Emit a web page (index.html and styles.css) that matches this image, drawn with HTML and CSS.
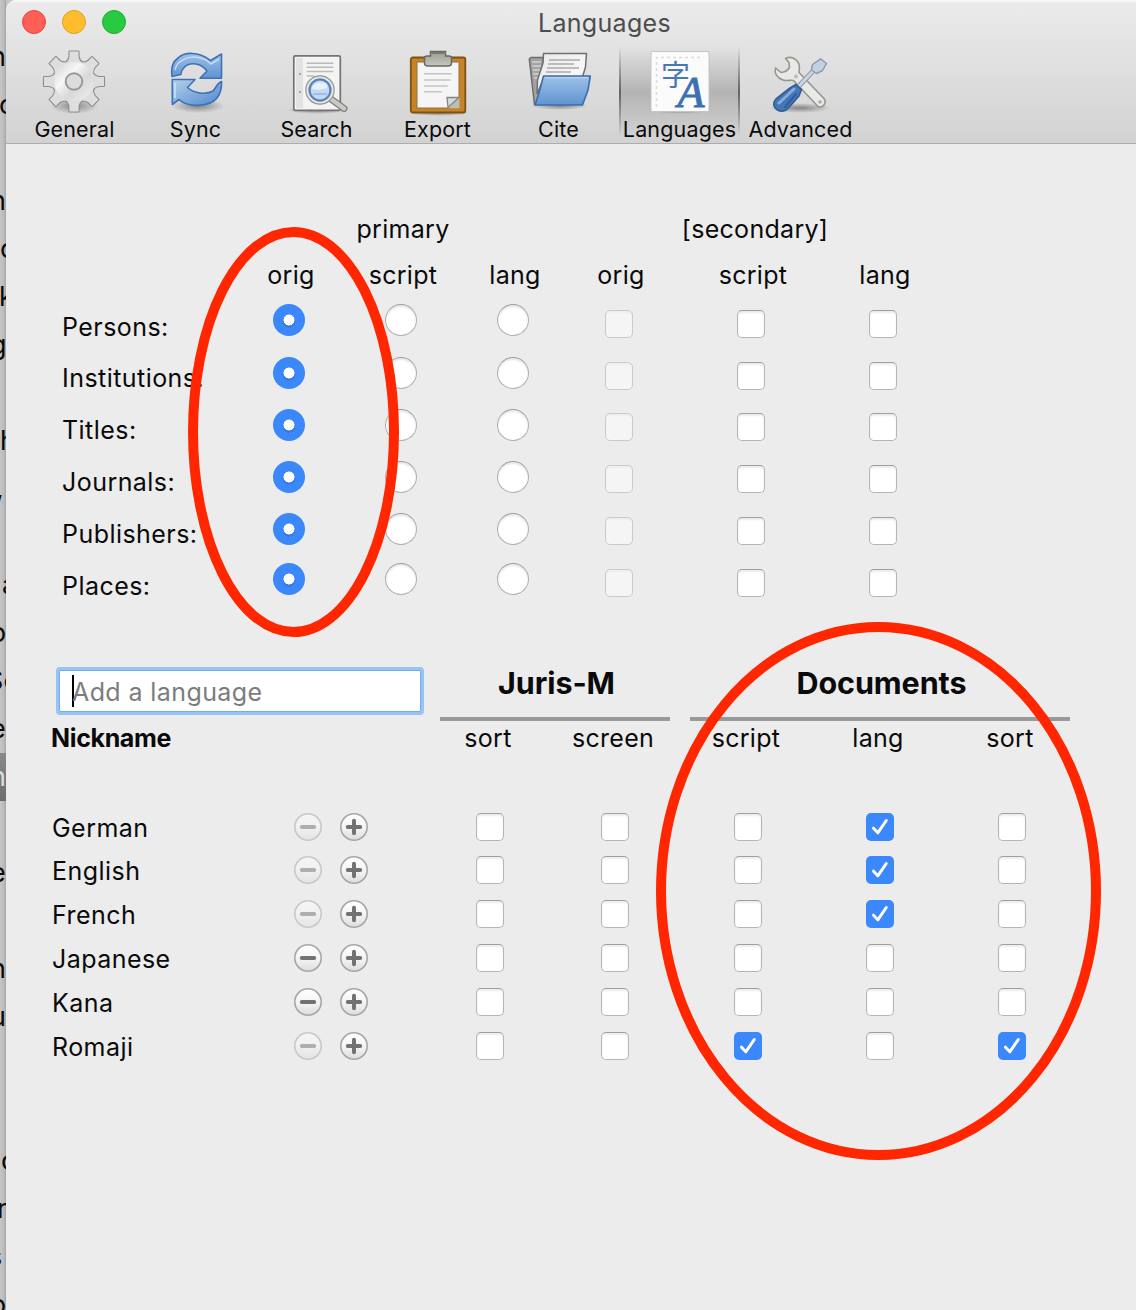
FILE: index.html
```html
<!DOCTYPE html>
<html lang="en">
<head>
<meta charset="utf-8">
<title>Languages</title>
<link rel="stylesheet" href="styles.css">
</head>
<body>
<svg class="defs" width="0" height="0">
  <defs>
    <linearGradient id="steel" x1="0" y1="0" x2="1" y2="1"><stop offset="0" stop-color="#d2d2d2"/><stop offset=".35" stop-color="#f6f6f6"/><stop offset=".6" stop-color="#d8d8d8"/><stop offset="1" stop-color="#f2f2f2"/></linearGradient>
    <linearGradient id="blue" x1="0" y1="0" x2="0" y2="1"><stop offset="0" stop-color="#9fc1e8"/><stop offset="1" stop-color="#5f93d0"/></linearGradient>
    <linearGradient id="blueUp" x1="0" y1="0" x2="1" y2="1"><stop offset="0" stop-color="#b4d0ef"/><stop offset="1" stop-color="#5288cb"/></linearGradient>
    <linearGradient id="paper" x1="0" y1="0" x2="1" y2="1"><stop offset="0" stop-color="#e9e9e9"/><stop offset="1" stop-color="#fefefe"/></linearGradient>
    <linearGradient id="clip" x1="0" y1="0" x2="0" y2="1"><stop offset="0" stop-color="#9b9c90"/><stop offset="1" stop-color="#c6c7bd"/></linearGradient>
    <radialGradient id="shade"><stop offset="0" stop-color="#000" stop-opacity=".38"/><stop offset="1" stop-color="#000" stop-opacity="0"/></radialGradient>
    <linearGradient id="knob" x1="0" y1="0" x2="0" y2="1"><stop offset="0" stop-color="#fff"/><stop offset=".55" stop-color="#f3f3f3"/><stop offset="1" stop-color="#dcdcdc"/></linearGradient>
    <path id="tooth" d="M23.500 13Q27 10.500 27.500 6.500V1.500H36.500V6.500Q37 10.500 40.500 13Z"/>
    <g id="gear"><circle cx="32" cy="31.500" r="20.500"/><use href="#tooth"/><use href="#tooth" transform="rotate(45 32 31.500)"/><use href="#tooth" transform="rotate(90 32 31.500)"/><use href="#tooth" transform="rotate(135 32 31.500)"/><use href="#tooth" transform="rotate(180 32 31.500)"/><use href="#tooth" transform="rotate(225 32 31.500)"/><use href="#tooth" transform="rotate(270 32 31.500)"/><use href="#tooth" transform="rotate(315 32 31.500)"/></g>
    <symbol id="tick" viewBox="0 0 28 28"><path d="M7.600 15.500L11.800 20L20.300 7.700" fill="none" stroke="#1f5fc4" stroke-opacity=".45" stroke-width="2.800" stroke-linecap="round" stroke-linejoin="round"/><path d="M7.500 15.200L11.800 19.800L20.300 7.500" fill="none" stroke="#fff" stroke-width="3" stroke-linecap="round" stroke-linejoin="round"/></symbol>
    <symbol id="minus" viewBox="0 0 28 28"><circle cx="14" cy="14" r="13.200" fill="url(#knob)" stroke="#a6a6a6" stroke-width="1.600"/><path d="M7.800 14H20.200" stroke="#727272" stroke-width="4" stroke-linecap="round"/></symbol>
    <symbol id="plus" viewBox="0 0 28 28"><circle cx="14" cy="14" r="13.200" fill="url(#knob)" stroke="#a6a6a6" stroke-width="1.600"/><path d="M7.800 14H20.200M14 7.800V20.200" stroke="#727272" stroke-width="4" stroke-linecap="round"/></symbol>
  </defs>
</svg>

<div class="desktop">
  <aside class="behind">
    <p></p><p class="l9">n</p><p class="l1">c</p><p></p><p class="l9">h</p><p>c</p><p class="l1">k</p><p class="l9">g</p><p></p><p>h</p><p class="l4">,</p><p></p><p class="r2">a</p><p class="l9">o</p><p class="l13">Se</p><p class="l9">er</p><p class="selected l9">n</p><p></p><p class="l9">e</p><p></p><p class="l9">n</p><p class="l9">u</p><p></p><p></p><p class="r1">c</p><p class="l3">r</p><p class="l12">s</p><p class="l9">o</p>
  </aside>

  <main class="window">
    <header class="chrome">
      <div class="titlebar">
        <div class="lights"><i class="light close"></i><i class="light min"></i><i class="light zoom"></i></div>
        <h1 class="title">Languages</h1>
      </div>
      <nav class="tools">
        <div class="tool">
          <svg class="icon" viewBox="0 0 64 64"><ellipse cx="32" cy="56" rx="24" ry="8" fill="url(#shade)"/><use href="#gear" fill="#8f8f8f" stroke="#8f8f8f" stroke-width="2.200" stroke-linejoin="round"/><use href="#gear" fill="#dedede"/><circle cx="32" cy="31.500" r="19.500" fill="url(#steel)"/><circle cx="32" cy="31.500" r="8.300" fill="#dcdcdc" stroke="#999" stroke-width="2"/></svg>
          <span>General</span>
        </div>
        <div class="tool">
          <svg class="icon" viewBox="0 0 64 64"><ellipse cx="35" cy="56" rx="27" ry="7" fill="url(#shade)"/><g stroke="#3e72b6" stroke-width="1.600" stroke-linejoin="round"><path fill="url(#blue)" d="M9 26.500C8 17 9.500 12 15 8C21 2 36 1 47.500 10.500L58.500 4V28.300H37L44 21C38 12.500 27 12 21.500 17C18.500 20 18 22 17.800 24.500Z"/><path fill="url(#blueUp)" d="M9.300 29.500V54.500L16 49.500C25 58 47 57 54 48C58 43 58.800 39 58.600 31.500C54 33 53 38 50 41C43 45 31 43.500 24.500 37.500L32 29.500Z"/></g><path d="M12 20C14 10 28 3 43 10L48 14L56 9" fill="none" stroke="#c7dcf4" stroke-width="1.500"/><path d="M12 33V48" stroke="#d5e5f7" stroke-width="1.400"/></svg>
          <span>Sync</span>
        </div>
        <div class="tool">
          <svg class="icon" viewBox="0 0 64 64"><ellipse cx="33" cy="60" rx="30" ry="4" fill="url(#shade)"/><rect x="9.800" y="5.800" width="46.500" height="54.500" rx="1.500" fill="#f3f3f3" stroke="#737373" stroke-width="1.700"/><path d="M12 8H19V58H12Z" fill="#e2e2e2"/><path d="M22.700 13.300H49.300M22.700 17.300H49.300M22.700 21.500H49.300M22.700 26H30" stroke="#bababa" stroke-width="1.500"/><circle cx="16" cy="24" r="1.200" fill="#aaa"/><circle cx="16" cy="42" r="1.200" fill="#aaa"/><path d="M47 49L60 58.500" stroke="#7f807b" stroke-width="7" stroke-linecap="round"/><path d="M47 49L60 58.500" stroke="#c9cac6" stroke-width="4.500" stroke-linecap="round"/><circle cx="36" cy="40" r="13" fill="#c4daf2" stroke="#92948e" stroke-width="3.500"/><circle cx="36" cy="40" r="12.600" fill="none" stroke="#e7e7e3" stroke-width="2"/><circle cx="36" cy="40" r="10.400" fill="none" stroke="#5381bd" stroke-width="2"/><path d="M28 37Q33 30 43 34V38Q35 41 28 39Z" fill="#e7f1fb"/><path d="M29 44H43" stroke="#9dbfe5" stroke-width="2"/></svg>
          <span>Search</span>
        </div>
        <div class="tool">
          <svg class="icon" viewBox="0 0 64 64"><ellipse cx="34" cy="63" rx="31" ry="3" fill="url(#shade)"/><rect x="5.800" y="7.500" width="54.500" height="55" rx="2" fill="#c48427" stroke="#805114" stroke-width="1.800"/><path d="M12 12H54V48L46 58H12Z" fill="#f5f5f5" stroke="#8e7040" stroke-width="1"/><path d="M12 58.300H42L54.500 47V58.300Z" fill="#bcbcb8"/><path d="M42 47.500H54L43 57.500Z" fill="#d9d9d5" stroke="#85867f" stroke-width="1.300"/><path d="M19 23.700H46.700M19 30H45.300M19 36H42.700M19 41.700H36.700" stroke="#c4c4c4" stroke-width="1.600"/><path d="M25.500 1.500H40.500V6H44Q46.500 6 46.500 8V13Q46.500 16 43 16H23Q19.500 16 19.500 13V8Q19.500 6 22 6H25.500Z" fill="url(#clip)" stroke="#666860" stroke-width="1.500"/><path d="M27 3H39" stroke="#77796e" stroke-width="2"/></svg>
          <span>Export</span>
        </div>
        <div class="tool">
          <svg class="icon" viewBox="0 0 64 64"><ellipse cx="34" cy="56" rx="28" ry="4" fill="url(#shade)"/><path d="M3.300 9L5 7.500H17V30L11 54.500H8.500Z" fill="#a3a3a3" stroke="#6c6c6c" stroke-width="1.500"/><path d="M6 12H15M6.500 16H15M7 20H15M7 24H14M8 28H13" stroke="#d2d2d2" stroke-width="1.300"/><path d="M17.500 3.600H60.500L59.500 17L55.500 30H17L11 44L11.500 30L17 13Z" fill="url(#paper)" stroke="#707070" stroke-width="1.500"/><path d="M23 10H54M22 14H48M21 18H53M20 22H45" stroke="#aaa" stroke-width="1.400"/><path d="M17.500 26H64.300L62 40L56.500 55H9L13 43Z" fill="url(#blue)" stroke="#3b6daf" stroke-width="1.600" stroke-linejoin="round"/><path d="M18.800 27.700H62" stroke="#b9d3ef" stroke-width="1.300"/></svg>
          <span>Cite</span>
        </div>
        <div class="tool active">
          <svg class="icon" viewBox="0 0 64 64"><ellipse cx="33" cy="59" rx="33" ry="5" fill="url(#shade)"/><rect x="4" y="1.500" width="58" height="60" rx="1.500" fill="#fbfbfb" stroke="#c4c4c4"/><path d="M9.500 57V7.500H56" fill="none" stroke="#dcdcdc" stroke-width="1.600" stroke-dasharray="3 3"/><text class="kanji" x="14" y="36">字</text><text class="capital" x="30.500" y="56.500">A</text></svg>
          <span>Languages</span>
        </div>
        <div class="tool">
          <svg class="icon" viewBox="0 0 64 64"><ellipse cx="32" cy="58" rx="31" ry="5" fill="url(#shade)"/><path d="M17.500 8.500C23 5.500 29 9 31 14C32 18 31 20 31 22.500L56 48.500C59 53 55 58.500 50 56.500L25.500 30.500C22 29.500 19 31.500 15 30C9 28 6 23 7.500 18L13 22.500Q19 22 21.500 17.500L21 12.500Z" fill="#e9e9e6" stroke="#969691" stroke-width="1.600" stroke-linejoin="round"/><circle cx="52" cy="52" r="1.800" fill="#aaa"/><circle cx="28" cy="26.500" r="2" fill="#bbb"/><path d="M31 36L47 19" stroke="#8f9cb0" stroke-width="5"/><path d="M31 36L47 19" stroke="#ccd5e4" stroke-width="2.800"/><path d="M43.500 20L44.500 14.500L52.500 8.800L58.500 13.500L54.500 20.500L48.500 23.500Z" fill="#c4d0e2" stroke="#8b9bb3" stroke-width="1.500" stroke-linejoin="round"/><path d="M28 34.500L33.500 39.500L31 46L20 58.500C17 62 12 61.500 9.500 60C5 57 4.500 53 8 49L22 38Z" fill="#4676b5" stroke="#2f5d9c" stroke-width="1.600" stroke-linejoin="round"/><path d="M11 53L26 39" stroke="#86abd9" stroke-width="3" stroke-linecap="round"/><path d="M17 57L28 44" stroke="#345e99" stroke-width="2" stroke-linecap="round"/></svg>
          <span>Advanced</span>
        </div>
      </nav>
    </header>

    <section class="roles">
      <div class="groups"><span class="primary">primary</span><span class="secondary">[secondary]</span></div>
      <div class="row head"><span></span><span>orig</span><span>script</span><span>lang</span><span>orig</span><span>script</span><span>lang</span></div>
      <div class="row high"><span class="name">Persons:</span><i class="radio on"></i><i class="radio"></i><i class="radio"></i><i class="box off"></i><i class="box"></i><i class="box"></i></div>
      <div class="row short"><span class="name">Institutions:</span><i class="radio on"></i><i class="radio"></i><i class="radio"></i><i class="box off"></i><i class="box"></i><i class="box"></i></div>
      <div class="row"><span class="name">Titles:</span><i class="radio on"></i><i class="radio"></i><i class="radio"></i><i class="box off"></i><i class="box"></i><i class="box"></i></div>
      <div class="row"><span class="name">Journals:</span><i class="radio on"></i><i class="radio"></i><i class="radio"></i><i class="box off"></i><i class="box"></i><i class="box"></i></div>
      <div class="row"><span class="name">Publishers:</span><i class="radio on"></i><i class="radio"></i><i class="radio"></i><i class="box off"></i><i class="box"></i><i class="box"></i></div>
      <div class="row high"><span class="name">Places:</span><i class="radio on"></i><i class="radio"></i><i class="radio"></i><i class="box off"></i><i class="box"></i><i class="box"></i></div>
    </section>

    <section class="langs">
      <div class="top">
        <div class="field"><span class="caret"></span><span class="hint">Add a language</span></div>
        <h2 class="group">Juris-M</h2>
        <h2 class="group">Documents</h2>
      </div>
      <div class="entry labels"><b class="nick">Nickname</b><span></span><span></span><span>sort</span><span>screen</span><span>script</span><span>lang</span><span>sort</span></div>
      <div class="entry first"><span class="name">German</span><svg class="btn dim"><use href="#minus"/></svg><svg class="btn"><use href="#plus"/></svg><i class="box"></i><i class="box"></i><i class="box"></i><i class="box on"><svg><use href="#tick"/></svg></i><i class="box"></i></div>
      <div class="entry"><span class="name">English</span><svg class="btn dim"><use href="#minus"/></svg><svg class="btn"><use href="#plus"/></svg><i class="box"></i><i class="box"></i><i class="box"></i><i class="box on"><svg><use href="#tick"/></svg></i><i class="box"></i></div>
      <div class="entry"><span class="name">French</span><svg class="btn dim"><use href="#minus"/></svg><svg class="btn"><use href="#plus"/></svg><i class="box"></i><i class="box"></i><i class="box"></i><i class="box on"><svg><use href="#tick"/></svg></i><i class="box"></i></div>
      <div class="entry"><span class="name">Japanese</span><svg class="btn"><use href="#minus"/></svg><svg class="btn"><use href="#plus"/></svg><i class="box"></i><i class="box"></i><i class="box"></i><i class="box"></i><i class="box"></i></div>
      <div class="entry"><span class="name">Kana</span><svg class="btn"><use href="#minus"/></svg><svg class="btn"><use href="#plus"/></svg><i class="box"></i><i class="box"></i><i class="box"></i><i class="box"></i><i class="box"></i></div>
      <div class="entry"><span class="name">Romaji</span><svg class="btn dim"><use href="#minus"/></svg><svg class="btn"><use href="#plus"/></svg><i class="box"></i><i class="box"></i><i class="box on"><svg><use href="#tick"/></svg></i><i class="box"></i><i class="box on"><svg><use href="#tick"/></svg></i></div>
    </section>
  </main>

  <svg class="marks" viewBox="0 0 1136 1310"><g fill="none" stroke="#ff2600" stroke-width="10"><ellipse cx="293.500" cy="432" rx="100.500" ry="200"/><ellipse cx="878.500" cy="891" rx="217.500" ry="264"/></g></svg>
</div>
</body>
</html>
```
FILE: styles.css
```css
* { box-sizing: border-box; }
body {
  margin: 0;
  font-family: Inter, "Liberation Sans", sans-serif;
  font-size: 25px;
  letter-spacing: 0.3px;
  color: #0a0a0a;
}
h1, h2, p { margin: 0; }
.defs { display: block; }
.desktop {
  position: relative;
  display: flex;
  width: 1136px;
  height: 1310px;
  overflow: hidden;
  background: #c4c4c4;
}

/* Sliver of the document behind the window */
.behind {
  width: 6px;
  flex: none;
  height: 1310px;
  overflow: hidden;
  font-size: 27px;
  background: linear-gradient(90deg, #c6c6c6, #b9b9b9 70%, #a2a2a2);
}
.behind p { height: 48px; line-height: 48px; white-space: nowrap; }
.behind p:first-child { height: 33px; }
.behind .l1 { text-indent: -1px; }
.behind .l3 { text-indent: -3px; }
.behind .l4 { text-indent: -4px; }
.behind .l9 { text-indent: -10px; }
.behind .l12 { text-indent: -12px; }
.behind .l13 { text-indent: -14px; }
.behind .r1 { text-indent: 1px; }
.behind .r2 { text-indent: 2px; }
.behind .selected {
  color: #ddd;
  background: linear-gradient(#8a8a8a, #6c6c6c);
}

.window {
  width: 1130px;
  flex: none;
  background: #ececec;
  border-top-left-radius: 10px;
  overflow: hidden;
}
.chrome {
  height: 144px;
  border-top: 2px solid #f7f7f7;
  border-bottom: 1px solid #acacac;
  background: linear-gradient(#ebebeb, #d2d2d2);
}
.titlebar { display: flex; height: 44px; }
.lights { display: flex; gap: 16px; padding: 8px 0 0 16px; width: 532px; }
.light { width: 24px; height: 24px; border-radius: 50%; }
.close { background: #ff5f57; border: 1px solid #e2463f; }
.min { background: #ffbd2e; border: 1px solid #dfa023; }
.zoom { background: #28ca42; border: 1px solid #1dad2b; }
.title { font-size: 25px; font-weight: 400; line-height: 42px; color: #4d4d4d; }
.tools { display: flex; height: 97px; padding-left: 8px; }
.tool {
  width: 121px;
  padding-top: 4px;
  text-align: center;
  font-size: 21.500px;
  letter-spacing: 0.150px;
  line-height: 30px;
  white-space: nowrap;
}
.tool span { display: block; }
.icon { display: block; width: 64px; height: 64px; margin-left: 28px; overflow: visible; }
.active {
  background:
    linear-gradient(rgba(0,0,0,0), rgba(0,0,0,.45) 48%, rgba(0,0,0,0) 92%) left / 2px 100% no-repeat,
    linear-gradient(rgba(0,0,0,0), rgba(0,0,0,.45) 48%, rgba(0,0,0,0) 92%) right / 2px 100% no-repeat,
    linear-gradient(rgba(0,0,0,0), rgba(0,0,0,.18) 48%, rgba(0,0,0,0) 95%);
}
.kanji { font: 29px "Noto Sans CJK JP", sans-serif; fill: #4779b9; letter-spacing: 0; }
.capital { font: italic 44px "Liberation Serif", serif; fill: #3d70b2; stroke: #3d70b2; stroke-width: 1px; letter-spacing: 0; }

.roles { padding-top: 62px; height: 523px; }
.groups { display: flex; height: 46px; line-height: 46px; padding-left: 228px; text-align: center; }
.primary { width: 338px; }
.secondary { width: 366px; }
.row {
  display: grid;
  grid-template-columns: 172px 112px 112px 112px 100px 164px 100px;
  height: 52px;
  padding-left: 56px;
  line-height: 52px;
}
.row.head { height: 49px; line-height: 46px; text-align: center; padding-left: 57px; }
.row.short { height: 51px; line-height: 51px; }
.row .box { margin-top: 9px; margin-left: -2px; }
.row .radio { margin-top: 5px; margin-left: -2px; }
.row.high .radio { margin-top: 3px; }
.row.short .radio { margin-top: 4px; }
.name { letter-spacing: 0.450px; }

.radio {
  justify-self: center;
  width: 32px;
  height: 32px;
  border: 1px solid #b0b0b0;
  border-top-color: #9c9c9c;
  border-radius: 50%;
  background: #fff;
  box-shadow: inset 0 2px 2px rgba(0,0,0,.1);
}
.radio.on {
  border: 0;
  background: radial-gradient(circle at 50% 50%, #fff 5.200px, rgba(255,255,255,0) 5.800px), radial-gradient(circle at 50% 54%, #2f74da 5px, #3b88fd 7px);
  box-shadow: none;
}
.box {
  display: block;
  justify-self: center;
  width: 28px;
  height: 28px;
  border: 1px solid #b5b5b5;
  border-top-color: #9e9e9e;
  border-radius: 5px;
  background: #fff;
  box-shadow: inset 0 2px 2px rgba(0,0,0,.08);
}
.box.off { background: #f5f5f5; border-color: #cacaca; box-shadow: inset 0 2px 2px rgba(0,0,0,.03); }
.box.on { border: 0; background: #3b88fd; box-shadow: none; }
.box svg { display: block; width: 28px; height: 28px; }

.top {
  display: grid;
  grid-template-columns: 368px 230px 380px;
  padding-left: 50px;
  height: 54px;
}
.field {
  display: flex;
  align-items: center;
  height: 48px;
  padding-left: 12px;
  border: 3px solid #95c4f6;
  border-radius: 4px;
  background: #fff;
  box-shadow: inset 0 0 0 1px #79abe4;
}
.caret { width: 2px; height: 32px; margin-left: 1px; background: #000; }
.hint { color: #7c7c7c; margin-left: -2px; padding-top: 2px; letter-spacing: 0.400px; }
.group {
  margin-left: 16px;
  margin-right: -16px;
  padding-left: 3px;
  border-bottom: 4px solid #999;
  font-size: 30.500px;
  font-weight: 700;
  line-height: 32px;
  letter-spacing: -0.100px;
  text-align: center;
}
.group + .group { margin-left: 36px; margin-right: -36px; }
.entry {
  display: grid;
  grid-template-columns: 233px 46px 97px 124px 126px 140px 124px 140px;
  height: 44px;
  padding-left: 46px;
  line-height: 44px;
}
.entry.labels { height: 85px; line-height: 34px; padding-left: 45px; }
.labels span { text-align: center; margin-left: -2px; }
.nick { letter-spacing: -0.350px; }
.entry.first { height: 43px; }
.entry .box, .btn { margin-top: 7px; }
.btn { display: block; width: 28px; height: 28px; margin-left: 9px; }
.dim { opacity: .5; }

.marks { position: absolute; left: 0; top: 0; width: 1136px; height: 1310px; }
```
